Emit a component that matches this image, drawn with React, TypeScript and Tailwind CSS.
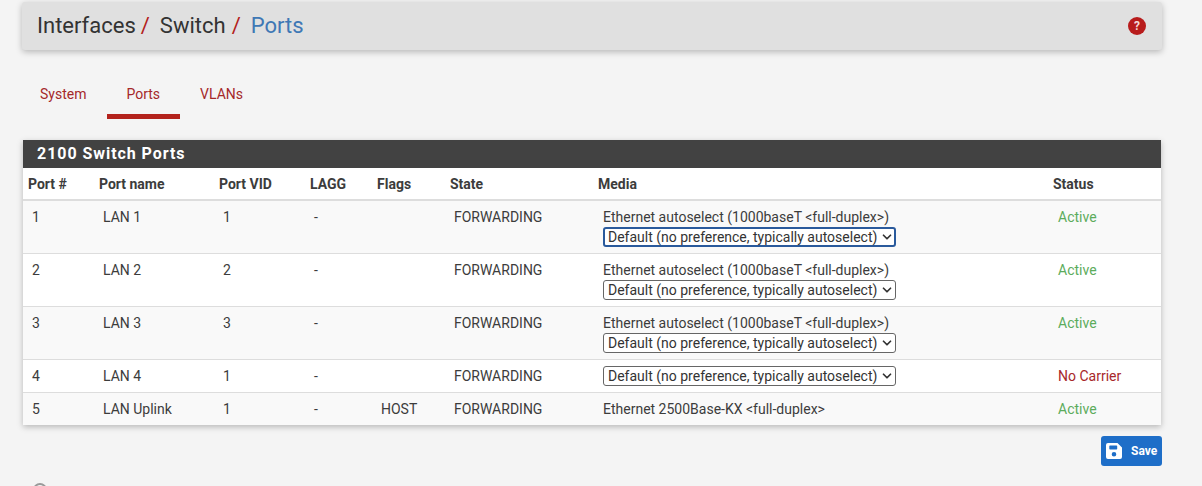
import { ChevronDown } from 'lucide-react'

type Row = {
  port: string
  name: string
  vid: string
  flags: string
  media: string
  select: boolean
  status: string
}

const rows: Row[] = [
  { port: '1', name: 'LAN 1', vid: '1', flags: '', media: 'Ethernet autoselect (1000baseT <full-duplex>)', select: true, status: 'Active' },
  { port: '2', name: 'LAN 2', vid: '2', flags: '', media: 'Ethernet autoselect (1000baseT <full-duplex>)', select: true, status: 'Active' },
  { port: '3', name: 'LAN 3', vid: '3', flags: '', media: 'Ethernet autoselect (1000baseT <full-duplex>)', select: true, status: 'Active' },
  { port: '4', name: 'LAN 4', vid: '1', flags: '', media: '', select: true, status: 'No Carrier' },
  { port: '5', name: 'LAN Uplink', vid: '1', flags: 'HOST', media: 'Ethernet 2500Base-KX <full-duplex>', select: false, status: 'Active' },
]

const columns = [
  { label: 'Port #', width: 'w-[71px]' },
  { label: 'Port name', width: 'w-[120px]' },
  { label: 'Port VID', width: 'w-[91px]' },
  { label: 'LAGG', width: 'w-[67px]' },
  { label: 'Flags', width: 'w-[73px]' },
  { label: 'State', width: 'w-[148px]' },
  { label: 'Media', width: 'w-[455px]' },
  { label: 'Status', width: 'w-[113px]' },
]

function MediaSelect({ focused }: { focused: boolean }) {
  return (
    <div
      className={`flex h-[20px] w-[293px] items-center justify-between rounded-[3px] bg-white text-[14px] leading-none text-[#333] ${
        focused ? 'border-2 border-[#2a5a9c] pl-[3px]' : 'border border-[#666] pl-[4px] pr-[1px]'
      }`}
    >
      <span>Default (no preference, typically autoselect)</span>
      <ChevronDown size={14} strokeWidth={3} className="text-[#333]" />
    </div>
  )
}

export default function App() {
  const focused = 0

  return (
    <div className="h-[486px] w-[1202px] overflow-hidden bg-[#f4f4f4] pt-[2px] font-['Roboto',sans-serif] text-[#3c3c3c]">
      <div className="mx-[22px] flex h-[48px] w-[1140px] items-center justify-between rounded-[3px] bg-[#e0e0e0] pl-[15px] pr-[16px] shadow-[0_2px_6px_rgba(0,0,0,0.25)]">
        <h1 className="flex text-[22px] leading-none text-[#333]">
          <span>Interfaces</span>
          <span className="ml-[5px] mr-[10px] text-[#b3221c]">/</span>
          <span>Switch</span>
          <span className="ml-[6px] mr-[10px] text-[#b3221c]">/</span>
          <span className="text-[#3f78b5]">Ports</span>
        </h1>
        <div className="flex h-[18px] w-[18px] items-center justify-center rounded-full bg-[#b81c1c] text-[12px] font-bold leading-none text-[#f4d8d8]">
          ?
        </div>
      </div>

      <nav className="ml-[23px] mt-[19px] flex h-[50px] text-[14px] text-[#a5282a]">
        <a className="flex h-full items-center pl-[17px] pr-[21px] pt-[1px]">System</a>
        <a className="flex h-full items-center border-b-[5px] border-[#b3221c] pl-[19px] pr-[20px] pt-[6px]">Ports</a>
        <a className="flex h-full items-center px-[20px] pt-[1px]">VLANs</a>
      </nav>

      <section className="ml-[23px] mt-[21px] w-[1138px] bg-white shadow-[0_2px_6px_rgba(0,0,0,0.25)]">
        <h2 className="flex h-[28px] items-center bg-[#424242] pl-[14px] text-[16px] font-bold tracking-[0.95px] text-white">
          2100 Switch Ports
        </h2>
        <table className="w-full table-fixed border-collapse text-[14px]">
          <thead>
            <tr className="h-[32px] border-b-2 border-[#dddddd]">
              {columns.map((c) => (
                <th key={c.label} className={`${c.width} px-[5px] pt-[2px] text-left text-[14px] font-bold`}>
                  {c.label}
                </th>
              ))}
            </tr>
          </thead>
          <tbody>
            {rows.map((r, i) => (
              <tr
                key={r.port}
                className={`border-b border-[#dddddd] align-top leading-[20px] last:border-b-0 ${
                  i % 2 === 1 ? 'bg-white' : 'bg-[#f9f9f9]'
                }`}
              >
                <td className="py-[6px] pl-[9px]">{r.port}</td>
                <td className="py-[6px] pl-[9px]">{r.name}</td>
                <td className="py-[6px] pl-[9px]">{r.vid}</td>
                <td className="py-[6px] pl-[9px]">-</td>
                <td className="py-[6px] pl-[9px]">{r.flags}</td>
                <td className="py-[6px] pl-[9px]">FORWARDING</td>
                <td className="py-[6px] pl-[10px]">
                  {r.media && <div>{r.media}</div>}
                  {r.select && <MediaSelect focused={i === focused} />}
                </td>
                <td className={`py-[6px] pl-[10px] ${r.status === 'Active' ? 'text-[#5cac5c]' : 'text-[#a8272a]'}`}>
                  {r.status}
                </td>
              </tr>
            ))}
          </tbody>
        </table>
      </section>

      <div className="ml-[1101px] mt-[11px]">
        <button className="flex h-[30px] w-[61px] items-center gap-[9px] rounded-[3px] bg-[#1e6ec8] pl-[5px] text-[12px] font-bold text-white">
          <svg width="16" height="16" viewBox="0 0 16 16" className="fill-white">
            <path
              fillRule="evenodd"
              d="M2 0h9.5L16 4.5V14a2 2 0 0 1-2 2H2a2 2 0 0 1-2-2V2a2 2 0 0 1 2-2zM4 2.5a.7.7 0 0 0-.7.7v2.6c0 .4.3.7.7.7h6.5c.4 0 .7-.3.7-.7V3.2a.7.7 0 0 0-.7-.7H4zM8 9a2.3 2.3 0 1 0 0 4.6A2.3 2.3 0 0 0 8 9z"
            />
          </svg>
          Save
        </button>
      </div>

      {/* top of the next icon, cut off by the window */}
      <div className="ml-[33px] mt-[17px] h-[14px] w-[14px] rounded-full border-2 border-[#9a9a9a]" />
    </div>
  )
}
